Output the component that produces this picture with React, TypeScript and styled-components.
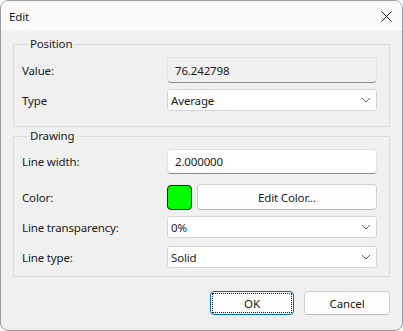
import React, { FC } from 'react';
import styled, { createGlobalStyle } from 'styled-components';

const GlobalStyle = createGlobalStyle`
    html, body {
        margin: 0;
        padding: 0;
        background: #ffffff;
    }
    * { box-sizing: border-box; }
`;

const Window = styled.div`
    width: 403px;
    height: 331px;
    border: 1px solid #9c9c9c;
    border-radius: 8px;
    background: #f0f0f0;
    overflow: hidden;
    display: flex;
    flex-direction: column;
    font-family: "Noto Sans", "Open Sans", sans-serif;
    font-size: 11.5px;
    letter-spacing: -0.15px;
    color: #1a1a1a;
`;

const TitleBar = styled.div`
    height: 30px;
    flex: none;
    display: flex;
    align-items: center;
    justify-content: space-between;
    padding: 0 10px 0 8px;
    background: #f9f9f9;
`;

const CloseBtn = styled.div`
    width: 12px;
    height: 12px;
    display: flex;
    align-items: center;
    justify-content: center;
`;

const Body = styled.div`
    flex: 1;
    display: flex;
    flex-direction: column;
    padding: 5px 12px 0 12px;
`;

const Group = styled.fieldset<{ $pb: number; $mt?: number }>`
    margin: ${(p) => p.$mt ?? 0}px 0 0 0;
    min-width: 0;
    padding: 0 12px ${(p) => p.$pb}px 8px;
    border: 1px solid #dcdcdc;
`;

const Legend = styled.legend`
    margin-left: 6px;
    padding: 0 2px;
    line-height: 16px;
`;

const Row = styled.div<{ $mt: number }>`
    display: grid;
    grid-template-columns: 145px 1fr;
    align-items: center;
    margin-top: ${(p) => p.$mt}px;
`;

const Label = styled.span`
    white-space: nowrap;
`;

const TextBox = styled.div<{ $readOnly?: boolean; $h: number }>`
    height: ${(p) => p.$h}px;
    display: flex;
    align-items: center;
    padding: 0 7px;
    border: 1px solid #e3e3e3;
    border-bottom-color: #8a8a8a;
    border-radius: 4px;
    background: ${(p) => (p.$readOnly ? '#f0f0f0' : '#ffffff')};
`;

const Combo = styled.div`
    height: 22px;
    display: flex;
    align-items: center;
    justify-content: space-between;
    padding: 0 4px 0 3px;
    border: 1px solid #d6d6d6;
    border-radius: 3px;
    background: #ffffff;
`;

const ColorWrap = styled.div`
    display: flex;
    align-items: center;
    gap: 5px;
`;

const Swatch = styled.div<{ $color: string }>`
    width: 25px;
    height: 25px;
    flex: none;
    border: 1px solid #1c1c1c;
    border-radius: 4px;
    background: ${(p) => p.$color};
`;

const Button = styled.button<{ $default?: boolean; $w?: number }>`
    height: ${(p) => (p.$w ? 24 : 26)}px;
    ${(p) => (p.$w ? `width: ${p.$w}px;` : 'flex: 1;')}
    font-family: inherit;
    font-size: inherit;
    letter-spacing: inherit;
    color: #1a1a1a;
    background: #fdfdfd;
    border: 1px solid ${(p) => (p.$default ? '#0067c0' : '#d0d0d0')};
    border-bottom-color: ${(p) => (p.$default ? '#0067c0' : '#bcbcbc')};
    border-radius: 4px;
    padding: 0;
    position: relative;
    ${(p) =>
        p.$default &&
        `&::after {
            content: '';
            position: absolute;
            inset: 1px;
            border: 1px dotted #1a1a1a;
            border-radius: 1px;
        }`}
`;

const Footer = styled.div`
    display: flex;
    justify-content: flex-end;
    gap: 10px;
    padding-top: 14px;
`;

const Chevron: FC = () => (
    <svg width="12" height="6" viewBox="0 0 12 6">
        <path d="M2 1 L6 5 L10 1" fill="none" stroke="#666666" strokeWidth="1" />
    </svg>
);

const App: FC = () => {
    return (
        <>
            <GlobalStyle />
            <Window>
                <TitleBar>
                    <span>Edit</span>
                    <CloseBtn>
                        <svg width="11" height="11" viewBox="0 0 11 11">
                            <path d="M0.5 0.5 L10.5 10.5 M10.5 0.5 L0.5 10.5" stroke="#1a1a1a" strokeWidth="1" />
                        </svg>
                    </CloseBtn>
                </TitleBar>
                <Body>
                    <Group $pb={15}>
                        <Legend>Position</Legend>
                        <Row $mt={5}>
                            <Label>Value:</Label>
                            <TextBox $readOnly $h={26}>76.242798</TextBox>
                        </Row>
                        <Row $mt={6}>
                            <Label>Type</Label>
                            <Combo>
                                <span>Average</span>
                                <Chevron />
                            </Combo>
                        </Row>
                    </Group>
                    <Group $pb={8} $mt={1}>
                        <Legend>Drawing</Legend>
                        <Row $mt={5}>
                            <Label>Line width:</Label>
                            <TextBox $h={25}>2.000000</TextBox>
                        </Row>
                        <Row $mt={10}>
                            <Label>Color:</Label>
                            <ColorWrap>
                                <Swatch $color="#00ff00" />
                                <Button>Edit Color...</Button>
                            </ColorWrap>
                        </Row>
                        <Row $mt={6}>
                            <Label>Line transparency:</Label>
                            <Combo>
                                <span>0%</span>
                                <Chevron />
                            </Combo>
                        </Row>
                        <Row $mt={8}>
                            <Label>Line type:</Label>
                            <Combo>
                                <span>Solid</span>
                                <Chevron />
                            </Combo>
                        </Row>
                    </Group>
                    <Footer>
                        <Button $default $w={84}>OK</Button>
                        <Button $w={86}>Cancel</Button>
                    </Footer>
                </Body>
            </Window>
        </>
    );
};

export default App;
